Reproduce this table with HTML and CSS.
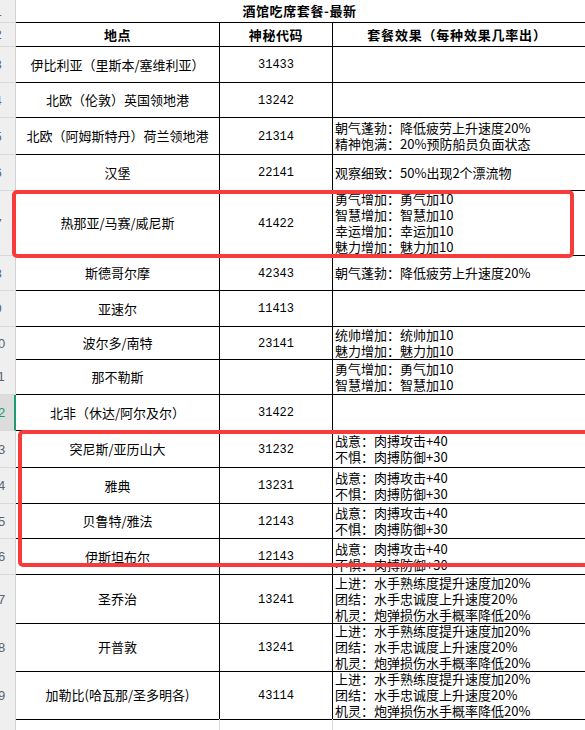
FILE: index.html
```html
<!DOCTYPE html>
<html lang="zh">
<head>
<meta charset="utf-8">
<title>酒馆吃席套餐-最新</title>
<link rel="stylesheet" href="styles.css">
</head>
<body>
<div class="sheet">
  <div class="row h23">
    <div class="rh"><span>1</span></div>
    <div class="cell title">酒馆吃席套餐-最新</div>
  </div>
  <div class="row h24">
    <div class="rh"><span>2</span></div>
    <div class="cell c1 bold">地点</div>
    <div class="cell c2 bold">神秘代码</div>
    <div class="cell c3 head">套餐效果（每种效果几率出）</div>
  </div>
  <div class="row h36">
    <div class="rh"><span>3</span></div>
    <div class="cell c1">伊比利亚（里斯本/塞维利亚）</div>
    <div class="cell c2 num">31433</div>
    <div class="cell c3"></div>
  </div>
  <div class="row h35">
    <div class="rh"><span>4</span></div>
    <div class="cell c1">北欧（伦敦）英国领地港</div>
    <div class="cell c2 num">13242</div>
    <div class="cell c3"></div>
  </div>
  <div class="row h37">
    <div class="rh"><span>5</span></div>
    <div class="cell c1">北欧（阿姆斯特丹）荷兰领地港</div>
    <div class="cell c2 num">21314</div>
    <div class="cell c3"><p>朝气蓬勃：降低疲劳上升速度20%<br>精神饱满：20%预防船员负面状态</p></div>
  </div>
  <div class="row h36">
    <div class="rh"><span>6</span></div>
    <div class="cell c1">汉堡</div>
    <div class="cell c2 num">22141</div>
    <div class="cell c3"><p>观察细致：50%出现2个漂流物</p></div>
  </div>
  <div class="row h65">
    <div class="rh"><span>7</span></div>
    <div class="cell c1">热那亚/马赛/威尼斯</div>
    <div class="cell c2 num">41422</div>
    <div class="cell c3"><p>勇气增加：勇气加10<br>智慧增加：智慧加10<br>幸运增加：幸运加10<br>魅力增加：魅力加10</p></div>
  </div>
  <div class="row h35">
    <div class="rh"><span>8</span></div>
    <div class="cell c1">斯德哥尔摩</div>
    <div class="cell c2 num">42343</div>
    <div class="cell c3"><p>朝气蓬勃：降低疲劳上升速度20%</p></div>
  </div>
  <div class="row h36">
    <div class="rh"><span>9</span></div>
    <div class="cell c1">亚速尔</div>
    <div class="cell c2 num">11413</div>
    <div class="cell c3"></div>
  </div>
  <div class="row h32">
    <div class="rh"><span>10</span></div>
    <div class="cell c1">波尔多/南特</div>
    <div class="cell c2 num">23141</div>
    <div class="cell c3"><p>统帅增加：统帅加10<br>魅力增加：魅力加10</p></div>
  </div>
  <div class="row h36">
    <div class="rh"><span>11</span></div>
    <div class="cell c1">那不勒斯</div>
    <div class="cell c2 num"></div>
    <div class="cell c3"><p>勇气增加：勇气加10<br>智慧增加：智慧加10</p></div>
  </div>
  <div class="row h36">
    <div class="rh selected"><span>12</span></div>
    <div class="cell c1">北非（休达/阿尔及尔）</div>
    <div class="cell c2 num">31422</div>
    <div class="cell c3"></div>
  </div>
  <div class="row h37">
    <div class="rh"><span>13</span></div>
    <div class="cell c1">突尼斯/亚历山大</div>
    <div class="cell c2 num">31232</div>
    <div class="cell c3"><p>战意：肉搏攻击+40<br>不惧：肉搏防御+30</p></div>
  </div>
  <div class="row h36">
    <div class="rh"><span>14</span></div>
    <div class="cell c1">雅典</div>
    <div class="cell c2 num">13231</div>
    <div class="cell c3"><p>战意：肉搏攻击+40<br>不惧：肉搏防御+30</p></div>
  </div>
  <div class="row h35">
    <div class="rh"><span>15</span></div>
    <div class="cell c1">贝鲁特/雅法</div>
    <div class="cell c2 num">12143</div>
    <div class="cell c3"><p>战意：肉搏攻击+40<br>不惧：肉搏防御+30</p></div>
  </div>
  <div class="row h36">
    <div class="rh"><span>16</span></div>
    <div class="cell c1">伊斯坦布尔</div>
    <div class="cell c2 num">12143</div>
    <div class="cell c3"><p>战意：肉搏攻击+40<br>不惧：肉搏防御+30</p></div>
  </div>
  <div class="row h48">
    <div class="rh"><span>17</span></div>
    <div class="cell c1">圣乔治</div>
    <div class="cell c2 num">13241</div>
    <div class="cell c3"><p>上进：水手熟练度提升速度加20%<br>团结：水手忠诚度上升速度20%<br>机灵：炮弹损伤水手概率降低20%</p></div>
  </div>
  <div class="row h48">
    <div class="rh"><span>18</span></div>
    <div class="cell c1">开普敦</div>
    <div class="cell c2 num">13241</div>
    <div class="cell c3"><p>上进：水手熟练度提升速度加20%<br>团结：水手忠诚度上升速度20%<br>机灵：炮弹损伤水手概率降低20%</p></div>
  </div>
  <div class="row h48">
    <div class="rh"><span>19</span></div>
    <div class="cell c1">加勒比(哈瓦那/圣多明各)</div>
    <div class="cell c2 num">43114</div>
    <div class="cell c3"><p>上进：水手熟练度提升速度加20%<br>团结：水手忠诚度上升速度20%<br>机灵：炮弹损伤水手概率降低20%</p></div>
  </div>
  <div class="row h36 empty">
    <div class="rh"><span>20</span></div>
    <div class="cell c1"></div>
    <div class="cell c2"></div>
    <div class="cell c3"></div>
  </div>

  <div class="mark mark-a"></div>
  <div class="mark mark-b"></div>
</div>
</body>
</html>
```

FILE: styles.css
```css
* { box-sizing: border-box; }

html, body {
  margin: 0;
  padding: 0;
  background: #ffffff;
  overflow: hidden;
}

body {
  font-family: "Noto Sans CJK SC", "Noto Sans", sans-serif;
  font-size: 13px;
  color: #000;
}

.sheet {
  position: relative;
  width: 585px;
  height: 730px;
  overflow: hidden;
}

.row {
  display: grid;
  grid-template-columns: 16px 204px 113px 1fr;
}

.h23 { height: 23px; }
.h24 { height: 24px; }
.h32 { height: 32px; }
.h35 { height: 35px; }
.h36 { height: 36px; }
.h37 { height: 37px; }
.h48 { height: 48px; }
.h65 { height: 65px; }

.rh {
  background: #efefef;
  border-right: 1px solid #d2d2d2;
  border-bottom: 1px solid #d9d9d9;
  overflow: hidden;
  display: flex;
  align-items: center;
}

.rh span {
  flex: none;
  width: 34px;
  margin-left: -19px;
  text-align: center;
  font-family: "Liberation Sans", sans-serif;
  font-size: 13px;
  color: #5a6470;
}

.rh.selected {
  background: #dcdcdc;
  border-right: 2px solid #1f9b6d;
}

.rh.selected span {
  color: #1f9b6d;
}

.cell {
  border-right: 1px solid #000;
  border-bottom: 1px solid #000;
  display: flex;
  align-items: center;
  white-space: nowrap;
  line-height: 16px;
}

.title {
  grid-column: 2 / -1;
  justify-content: center;
  font-weight: 700;
  letter-spacing: 0.6px;
  border-right: none;
  padding-right: 2px;
}

.c1, .c2 { justify-content: center; }

.c3 {
  border-right: none;
  padding-left: 2px;
}

.c3 p { margin: 0; }

.head {
  justify-content: center;
  font-weight: 700;
  letter-spacing: 0.8px;
  padding-left: 0;
  padding-right: 4px;
}

.bold {
  font-weight: 700;
  letter-spacing: 0.6px;
}

.num {
  font-family: "Liberation Mono", monospace;
  font-size: 12px;
  padding-top: 1px;
}

.empty .cell {
  border-right-color: #dadada;
  border-bottom-color: #dadada;
}

.mark {
  position: absolute;
  border: 4px solid #f93a3a;
  border-radius: 5px;
  pointer-events: none;
}

.mark-a {
  left: 12px;
  top: 190px;
  width: 562px;
  height: 68px;
}

.mark-b {
  left: 18px;
  top: 430px;
  width: 600px;
  height: 137px;
}
```
